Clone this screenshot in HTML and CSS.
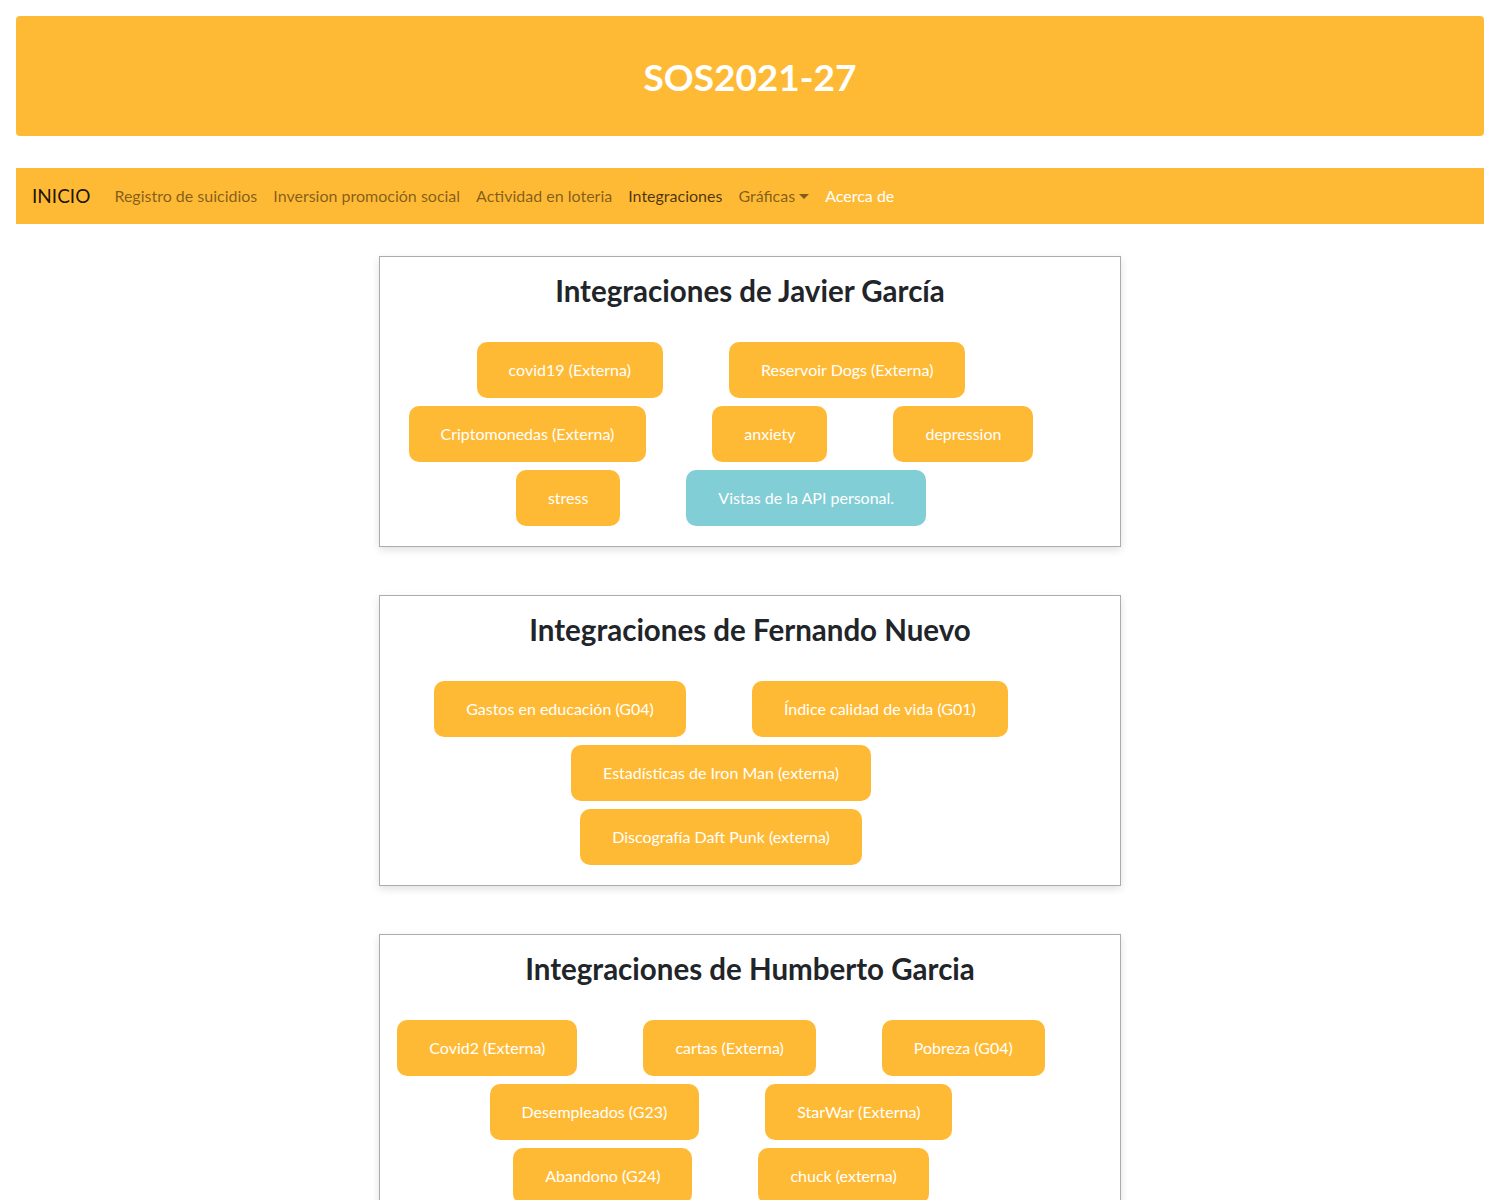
FILE: index.html
```html
<!DOCTYPE html>
<html lang="es">
<head>
<meta charset="utf-8">
<title>SOS2021-27</title>
<link rel="stylesheet" href="styles.css">
</head>
<body>
<div class="page">
  <header class="jumbo">
    <h1 class="jumbo-title">SOS2021-27</h1>
  </header>
  <nav class="navbar">
    <a class="brand" href="#">INICIO</a>
    <a class="nav-link" href="#">Registro de suicidios</a>
    <a class="nav-link" href="#">Inversion promoción social</a>
    <a class="nav-link" href="#">Actividad en loteria</a>
    <a class="nav-link active" href="#">Integraciones</a>
    <a class="nav-link" href="#">Gráficas<span class="caret"></span></a>
    <a class="nav-link white" href="#">Acerca de</a>
  </nav>

  <main class="cards">
    <section class="card">
      <h2 class="card-title">Integraciones de Javier García</h2>
      <div class="row"><a class="btn">covid19 (Externa)</a><a class="btn">Reservoir Dogs (Externa)</a></div>
      <div class="row"><a class="btn">Criptomonedas (Externa)</a><a class="btn">anxiety</a><a class="btn">depression</a></div>
      <div class="row"><a class="btn">stress</a><a class="btn info">Vistas de la API personal.</a></div>
    </section>

    <section class="card">
      <h2 class="card-title">Integraciones de Fernando Nuevo</h2>
      <div class="row"><a class="btn">Gastos en educación (G04)</a><a class="btn">Índice calidad de vida (G01)</a></div>
      <div class="row"><a class="btn">Estadísticas de Iron Man (externa)</a></div>
      <div class="row"><a class="btn">Discografía Daft Punk (externa)</a></div>
    </section>

    <section class="card">
      <h2 class="card-title">Integraciones de Humberto Garcia</h2>
      <div class="row"><a class="btn">Covid2 (Externa)</a><a class="btn">cartas (Externa)</a><a class="btn">Pobreza (G04)</a></div>
      <div class="row"><a class="btn">Desempleados (G23)</a><a class="btn">StarWar (Externa)</a></div>
      <div class="row"><a class="btn">Abandono (G24)</a><a class="btn">chuck (externa)</a></div>
    </section>
  </main>
</div>
</body>
</html>
```

FILE: styles.css
```css
* { box-sizing: border-box; }
html, body { margin: 0; padding: 0; background: #fff; }
body {
  font-family: Lato, "Open Sans", "Liberation Sans", sans-serif;
  font-size: 16px;
  line-height: 1.5;
  color: #212529;
}
.page { padding: 16px; }

.jumbo {
  background: #ffba35;
  border-radius: 4px;
  height: 120px;
  display: flex;
  align-items: center;
  justify-content: center;
}
.jumbo-title {
  margin: 0;
  color: #fff;
  font-size: 37px;
  font-weight: 700;
  line-height: 1.2;
  padding-top: 2px;
}

.navbar {
  margin-top: 32px;
  background: #ffba35;
  height: 56px;
  padding: 8px 16px;
  display: flex;
  align-items: center;
}
.navbar a { text-decoration: none; }
.brand {
  font-size: 19px;
  color: rgba(0,0,0,.9);
  margin-right: 16px;
  line-height: 30px;
}
.nav-link {
  padding: 8px;
  color: rgba(0,0,0,.5);
  font-size: 16px;
  line-height: 24px;
  display: flex;
  align-items: center;
}
.nav-link.active { color: rgba(0,0,0,.72); }
.nav-link.white { color: #fff; }
.caret {
  display: inline-block;
  width: 0; height: 0;
  margin-left: 4px;
  border-left: 5px solid transparent;
  border-right: 5px solid transparent;
  border-top: 5px solid rgba(0,0,0,.5);
}

.cards {
  margin-top: 32px;
  display: flex;
  flex-direction: column;
  align-items: center;
  gap: 48px;
}
.card {
  width: 742px;
  border: 1px solid #acacac;
  box-shadow: 0 3px 8px rgba(0,0,0,.12);
  padding: 17px 16px 16px;
  background: #fff;
}
.card-title {
  margin: 0 0 30px;
  text-align: center;
  font-size: 29.5px;
  font-weight: 700;
  line-height: 34px;
  color: #212529;
}
.row {
  display: flex;
  justify-content: center;
}
.btn {
  display: inline-block;
  margin: 4px 62px 4px 4px;
  padding: 16px 32px;
  background: #ffba35;
  color: #fff;
  border-radius: 10px;
  font-size: 16px;
  line-height: 24px;
  white-space: nowrap;
}
.btn.info { background: #81ced6; }
```
